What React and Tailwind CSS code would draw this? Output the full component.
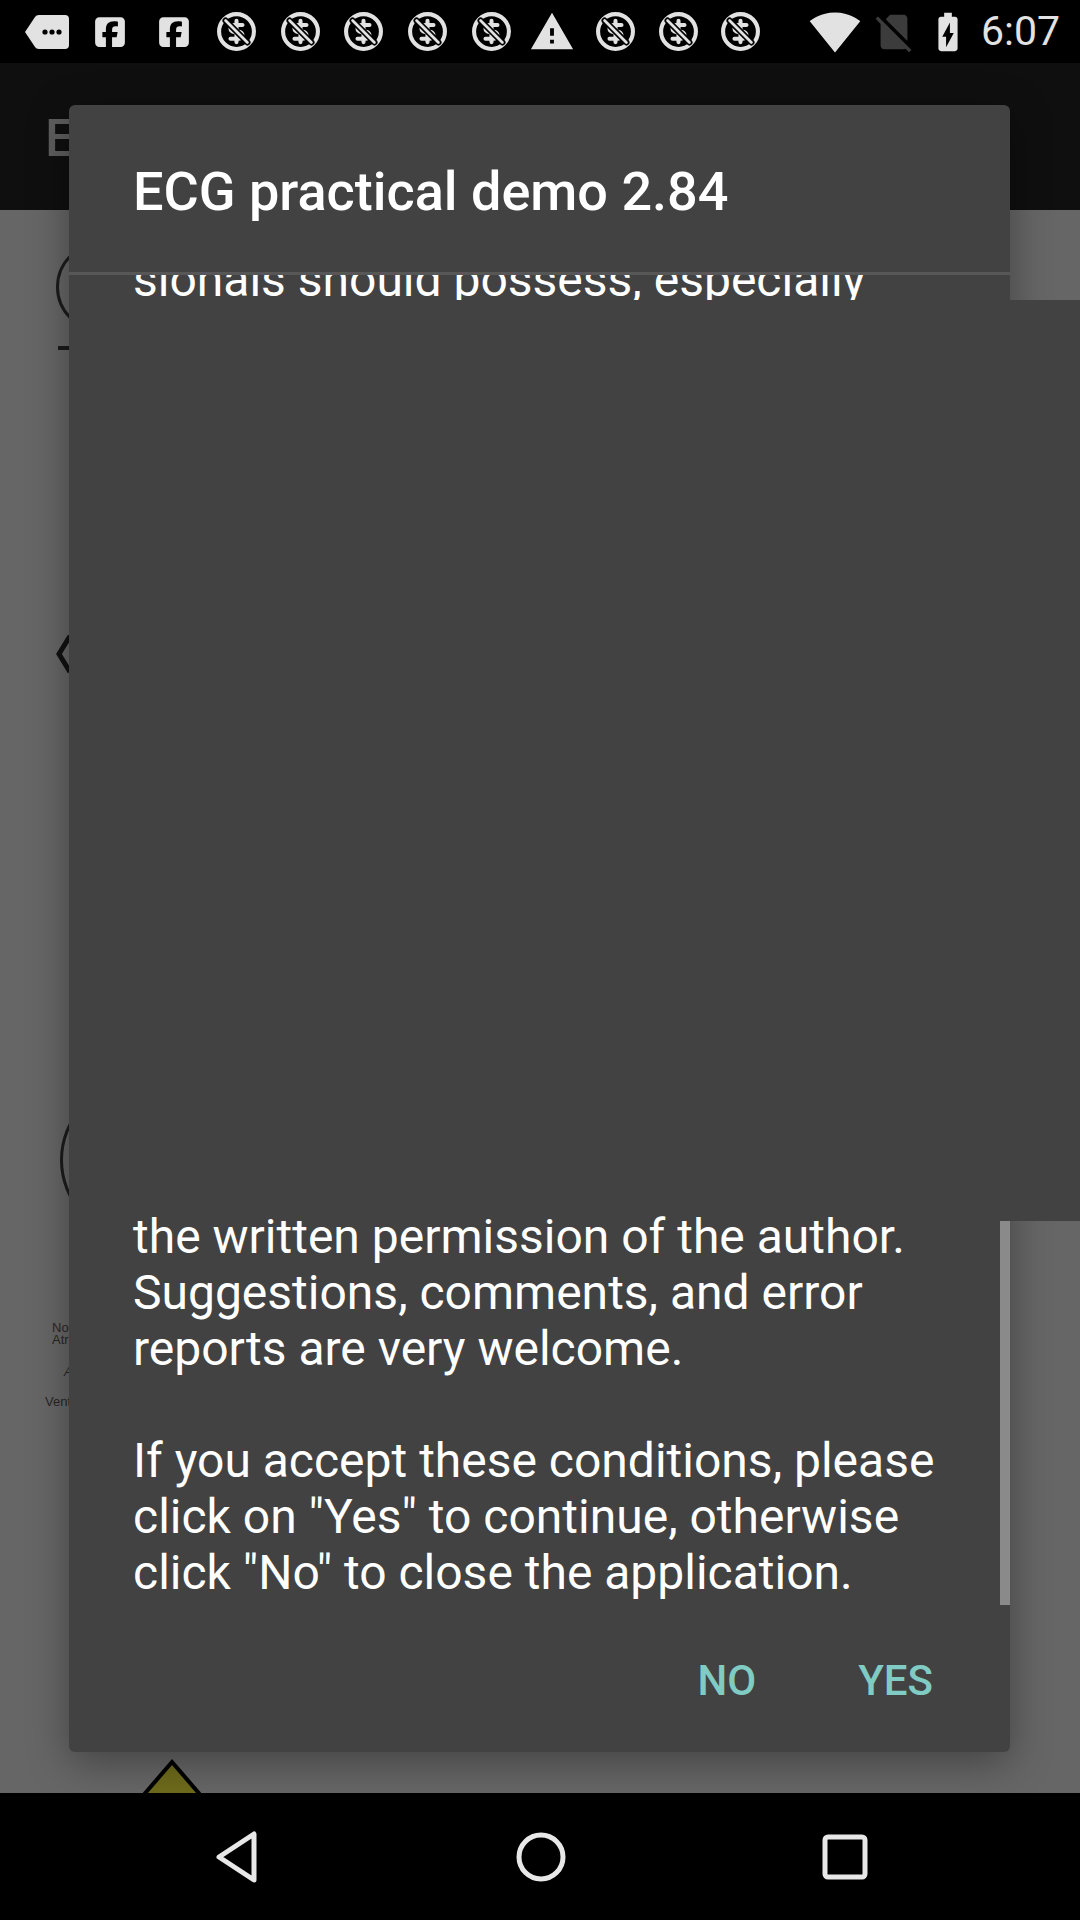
import { MdWarning, MdSignalWifi4Bar, MdSignalCellularNoSim, MdBatteryChargingFull } from 'react-icons/md';
import { FaSquareFacebook } from 'react-icons/fa6';

// Status bar "no money" notification icon
const NoMoneyIcon = ({ className }) => (
	<svg viewBox="0 0 24 24" className={className} fill="none" stroke="#e2e2e2" strokeWidth="2.4" strokeLinecap="round">
		<circle cx="12" cy="12" r="10.2" />
		<path d="M15.5 8.2h-5a2 2 0 1 0 0 4h3a2 2 0 1 1 0 4H8.5" />
		<path d="M12 5.8v12.4" />
		<path d="M5.6 5.6l12.8 12.8" stroke="#000" strokeWidth="3.6" />
		<path d="M5.6 5.6l12.8 12.8" strokeWidth="1.6" />
	</svg>
);

const TagIcon = () => (
	<svg viewBox="0 0 44 34" className="w-[44px] h-[34px]">
		<path d="M0 17 L10 2 Q11 0 14 0 H40 Q44 0 44 4 V30 Q44 34 40 34 H14 Q11 34 10 32 Z" fill="#e2e2e2" />
		<circle cx="20" cy="17" r="2.6" fill="#000" />
		<circle cx="27" cy="17" r="2.6" fill="#000" />
		<circle cx="34" cy="17" r="2.6" fill="#000" />
	</svg>
);

const StatusBar = () => (
	<div className="h-[63px] bg-black flex items-center shrink-0 text-[#e2e2e2]">
		<div className="ml-[25px]"><TagIcon /></div>
		<FaSquareFacebook className="ml-[24px] w-[34px] h-[34px]" />
		<FaSquareFacebook className="ml-[30px] w-[34px] h-[34px]" />
		<NoMoneyIcon className="ml-[25px] w-[41px] h-[41px]" />
		<NoMoneyIcon className="ml-[23px] w-[41px] h-[41px]" />
		<NoMoneyIcon className="ml-[22px] w-[41px] h-[41px]" />
		<NoMoneyIcon className="ml-[23px] w-[41px] h-[41px]" />
		<NoMoneyIcon className="ml-[23px] w-[41px] h-[41px]" />
		<MdWarning className="ml-[17px] w-[46px] h-[46px]" />
		<NoMoneyIcon className="ml-[20px] w-[41px] h-[41px]" />
		<NoMoneyIcon className="ml-[22px] w-[41px] h-[41px]" />
		<NoMoneyIcon className="ml-[21px] w-[41px] h-[41px]" />
		<MdSignalWifi4Bar className="ml-[48px] w-[52px] h-[52px]" />
		<MdSignalCellularNoSim className="ml-[10px] w-[46px] h-[46px] text-[#3c3c3c]" />
		<MdBatteryChargingFull className="ml-[8px] w-[46px] h-[46px]" />
		<span className="ml-[10px] text-[41px] leading-none">6:07</span>
	</div>
);

const NavBar = () => (
	<div className="h-[127px] bg-black flex items-center shrink-0">
		<svg viewBox="0 0 50 56" className="ml-[212px] w-[50px] h-[56px]">
			<path d="M42 5 V51 L7 28 Z" fill="none" stroke="#e8e8e8" strokeWidth="5" strokeLinejoin="round" />
		</svg>
		<svg viewBox="0 0 56 56" className="ml-[251px] w-[56px] h-[56px]">
			<circle cx="28" cy="28" r="22" fill="none" stroke="#e8e8e8" strokeWidth="5" />
		</svg>
		<svg viewBox="0 0 46 46" className="ml-[253px] w-[46px] h-[46px]">
			<rect x="3" y="3" width="40" height="40" rx="3" fill="none" stroke="#e8e8e8" strokeWidth="5" />
		</svg>
	</div>
);

// The app behind the dialog, dimmed by the scrim
const Backdrop = () => (
	<div className="flex-1 flex flex-col">
		<div className="h-[147px] bg-[#0f0f0f] pl-[45px] pt-[50px] shrink-0">
			<span className="text-[52px] leading-[52px] font-medium text-[#5e5e5e] whitespace-nowrap">ECG practical demo</span>
		</div>
		<div className="flex-1 bg-[#666666] relative overflow-hidden">
			<div className="absolute left-[56px] top-[32px] w-[90px] h-[90px] rounded-full border-[3px] border-[#1c1c1c]" />
			<div className="absolute left-[58px] top-[136px] w-[14px] h-[4px] bg-[#1a1a1a]" />
			<svg viewBox="0 0 16 40" className="absolute left-[56px] top-[424px] w-[16px] h-[40px]">
				<path d="M14 2 L3 20 L14 38" fill="none" stroke="#111" strokeWidth="5" />
			</svg>
			<div className="absolute left-[60px] top-[870px] w-[160px] h-[160px] rounded-full border-[3px] border-[#1c1c1c]" />
			<div className="absolute left-[52px] top-[1112px] text-[13px] leading-[12px] text-[#262626] font-['Liberation_Sans',sans-serif]">
				<div>Noc</div>
				<div>Atri</div>
				<div className="pl-[12px] pt-[20px] italic">A</div>
				<div className="-ml-[7px] pt-[18px]">Vent</div>
			</div>
			<svg viewBox="0 0 70 40" className="absolute left-[137px] top-[1548px] w-[70px] h-[40px]">
				<path d="M35 4 L66 40 L4 40 Z" fill="#6e6b1c" stroke="#000" strokeWidth="4" strokeLinejoin="miter" />
			</svg>
		</div>
	</div>
);

const Dialog = () => (
	<div className="absolute left-[69px] top-[105px] w-[941px] h-[1647px] bg-[#424242] rounded-[6px] shadow-[0_10px_40px_rgba(0,0,0,0.35)] flex flex-col text-white">
		<div className="h-[167px] pt-[56px] pl-[64px] shrink-0">
			<h1 className="text-[54px] leading-[62px] font-medium whitespace-nowrap">ECG practical demo 2.84</h1>
		</div>
		<div className="h-[3px] bg-[#575757] shrink-0" />
		<div className="relative h-[1330px] shrink-0 flex flex-col text-[48px] leading-[56px]">
			<div className="h-[25px] overflow-hidden pl-[64px] shrink-0">
				<p className="-mt-[23px] whitespace-nowrap">sionals should possess, especially</p>
			</div>
			{/* stale area the scroll view failed to redraw */}
			<div className="h-[921px] w-[1011px] bg-[#424242] shrink-0" />
			<div className="-mt-[12px] pl-[64px] whitespace-nowrap">
				<p>the written permission of the author.</p>
				<p>Suggestions, comments, and error</p>
				<p>reports are very welcome.</p>
				<p>&nbsp;</p>
				<p>If you accept these conditions, please</p>
				<p>click on "Yes" to continue, otherwise</p>
				<p>click "No" to close the application.</p>
			</div>
			<div className="absolute right-0 top-[946px] bottom-0 w-[10px] bg-[#8a8a8a]" />
		</div>
		<div className="flex justify-end pt-[55px] pr-[77px] gap-[102px] text-[42px] leading-[42px] font-medium text-[#80cbc4]">
			<span>NO</span>
			<span>YES</span>
		</div>
	</div>
);

export default function App() {
	return (
		<div className="relative w-[1080px] h-[1920px] overflow-hidden flex flex-col bg-black font-['Roboto',sans-serif]">
			<StatusBar />
			<Backdrop />
			<NavBar />
			<Dialog />
		</div>
	);
}
